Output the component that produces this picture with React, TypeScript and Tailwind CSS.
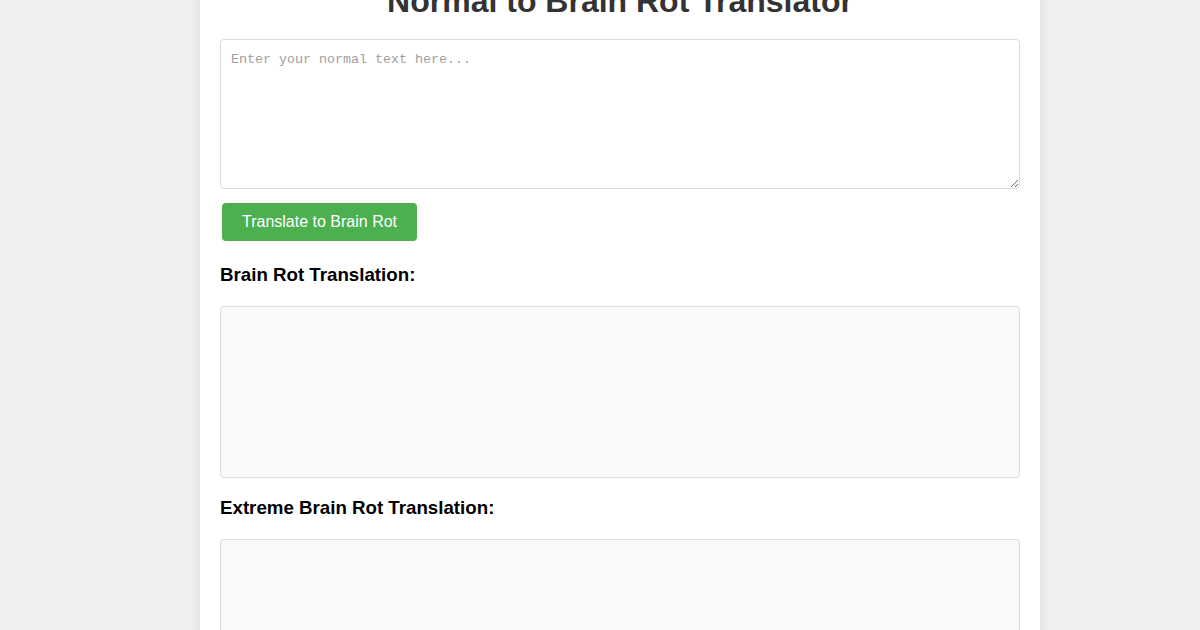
import React from 'react';

const App: React.FC = () => {
	return (
		<div className="flex h-screen justify-center overflow-hidden bg-[#f0f0f0] pl-10 font-['Liberation_Sans',Arial,sans-serif]">
			<div className="-mt-[56px] h-fit w-[840px] rounded-lg bg-white p-5 shadow-[0_0_10px_rgba(0,0,0,0.1)]">
				<h1 className="mt-[19px] mb-[19px] text-center text-[32px] leading-[37px] font-bold text-[#333]">
					Normal to Brain Rot Translator
				</h1>
				<textarea
					className="block h-[150px] w-full resize-y rounded border border-[#ddd] p-2.5 font-['Liberation_Mono',monospace] text-[13.33px] placeholder:text-[#a0a0a0] focus:outline-none"
					placeholder="Enter your normal text here..."
				/>
				<button className="mt-[14px] ml-[2px] rounded bg-[#4CAF50] px-5 py-2.5 text-base leading-[18px] text-white">
					Translate to Brain Rot
				</button>
				<h3 className="mt-[23px] mb-[20px] text-[18.72px] leading-[22px] font-bold text-black">
					Brain Rot Translation:
				</h3>
				<div className="min-h-[172px] rounded border border-[#ddd] bg-[#f9f9f9] p-2.5"></div>
				<h3 className="mt-[19px] mb-[20px] text-[18.72px] leading-[22px] font-bold text-black">
					Extreme Brain Rot Translation:
				</h3>
				<div className="min-h-[172px] rounded border border-[#ddd] bg-[#f9f9f9] p-2.5"></div>
			</div>
		</div>
	);
};

export default App;
